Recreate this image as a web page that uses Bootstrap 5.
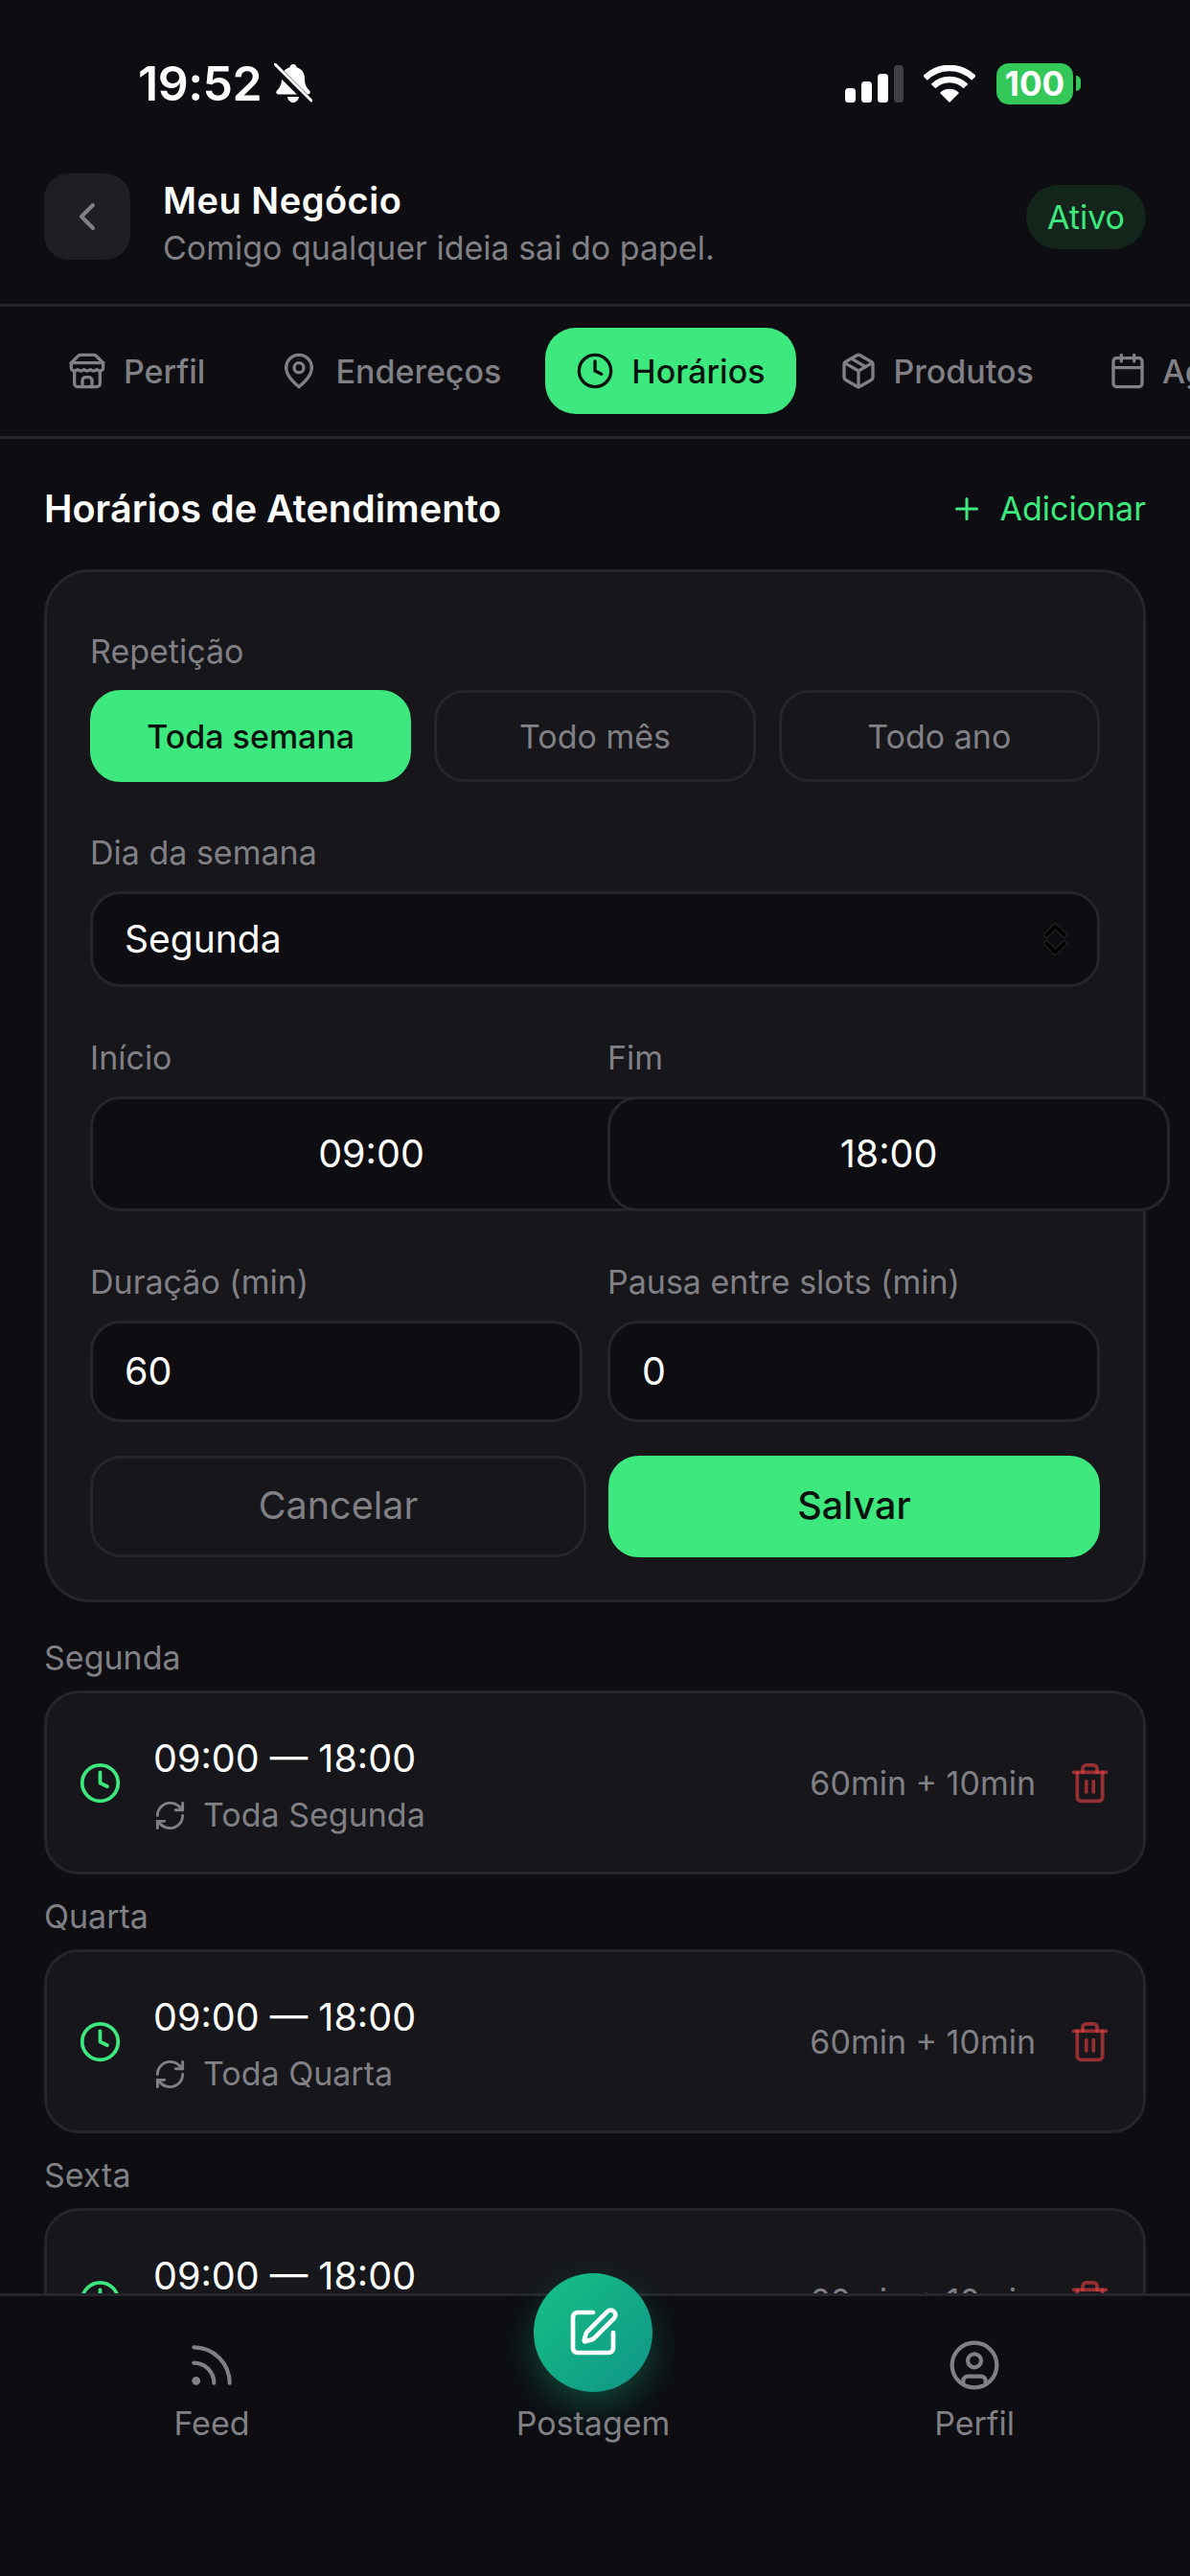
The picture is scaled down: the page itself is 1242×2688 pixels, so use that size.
<!DOCTYPE html>
<html lang="pt-BR">
<head>
  <meta charset="UTF-8">
  <title>Meu Negócio - Horários</title>
  <meta name="viewport" content="width=device-width, initial-scale=1">
  <link href="https://cdn.jsdelivr.net/npm/bootstrap@5.3.0/dist/css/bootstrap.min.css" rel="stylesheet">
  <style>
    html, body { height: 2688px; overflow: hidden; }
    body {
      font-family: "Inter", "Liberation Sans", sans-serif;
      background-color: #0d0d12;
      color: #fff;
      font-size: 34px;
    }
    svg.ico { fill: none; stroke: currentColor; stroke-width: 2; stroke-linecap: round; stroke-linejoin: round; flex: none; }

    .app { height: 2688px; }

    /* status bar */
    .status-bar { height: 174px; padding: 0 114px 0 144px; }
    .status-time { font-size: 50px; font-weight: 600; line-height: 1; letter-spacing: -.5px; }
    .status-bell { margin-left: 13px; }
    .status-wifi { margin: 0 22px 0 21px; }
    .batt { width: 80px; height: 43px; border-radius: 13px; background: #34c759; font-size: 35px; font-weight: 700; line-height: 43px; text-align: center; }
    .batt-nub { width: 5px; height: 16px; margin-left: 3px; background: #34c759; border-radius: 0 5px 5px 0; }

    /* header */
    .head-bar { height: 146px; padding: 7px 46px 0; border-bottom: 3px solid #25252c; align-items: flex-start; }
    .back-btn { width: 90px; height: 90px; border-radius: 26px; background: #1e1f24; color: #808085; flex: none; }
    .head-text { margin-left: 34px; padding-top: 6px; }
    .head-title { font-size: 38px; font-weight: 600; line-height: 44px; letter-spacing: .5px; }
    .head-sub { font-size: 34px; line-height: 40px; color: #808085; margin-top: 8px; }
    .status-pill { margin-top: 12px; height: 67px; width: 125px; border-radius: 34px; background: #14251c; color: #3de97e; font-size: 34px; }

    /* tabs */
    .tab-strip { padding: 22px 0 23px 39px; gap: 13px; border-bottom: 3px solid #25252c; overflow: hidden; flex-wrap: nowrap; }
    .tab-strip .nav-link { height: 90px; padding: 0 33px 0 32px; gap: 18px; color: #808085; font-size: 34px; font-weight: 500; border-radius: 32px; flex: none; }
    .tab-strip .nav-link.tight { gap: 16px; }
    .tab-strip .nav-link.active { background: #3de97e; color: #07120c; }

    /* content */
    .app-main { flex: 1 1 0; min-height: 0; overflow: hidden; padding: 50px 46px 0; }
    .sec-title { font-size: 39.600px; font-weight: 600; line-height: 46px; margin: 0; }
    .add-link { color: #3de97e; font-size: 34px; text-decoration: none; gap: 16px; line-height: 46px; }

    .form-box { background: #16161b; border: 3px solid #25252c; border-radius: 48px; padding: 63px 45px 44px; margin-top: 40px; }
    .fld-label { display: block; font-size: 34px; line-height: 40px; color: #808085; margin: 0 0 20px; }
    .fld-group { margin-bottom: 54px; }
    .two-cols { display: grid; grid-template-columns: 1fr 1fr; column-gap: 26px; }
    .two-cols > div { min-width: 0; }

    .opt-row { gap: 24px; }
    .opt-btn { flex: 1 1 0; height: 96px; border-radius: 32px; font-size: 34px; color: #808085; background: transparent; border: 3px solid #25252c; padding: 0; }
    .opt-btn.on { background: #3de97e; border-color: #3de97e; color: #07120c; font-weight: 500; }

    .form-control.dark-input, .form-select.dark-input {
      background-color: #0d0d12; border: 3px solid #25252c; border-radius: 32px; color: #fff; font-size: 39.500px; box-shadow: none;
    }
    .form-select.dark-input {
      height: 100px; padding: 0 33px; font-size: 39px;
      background-image: url("data:image/svg+xml,%3Csvg xmlns='http://www.w3.org/2000/svg' viewBox='0 0 24 32' fill='none' stroke='%23000' stroke-width='4' stroke-linecap='round' stroke-linejoin='round'%3E%3Cpath d='M3 12l9-9 9 9M3 20l9 9 9-9' stroke='%23333' stroke-width='5.400'/%3E%3Cpath d='M3 12l9-9 9 9M3 20l9 9 9-9'/%3E%3C/svg%3E");
      background-size: 25px 34px; background-position: right 31px center;
    }
    .form-control.time-input { width: 587px; max-width: none; height: 120px; text-align: center; padding: 0; position: relative; }
    .form-control.num-input { height: 106px; padding: 0 33px; }

    .act-row { gap: 23px; margin-top: 35px; }
    .act-btn { height: 106px; border-radius: 32px; font-size: 39.500px; padding: 0; }
    .act-btn.ghost { flex: 0 0 518px; background: transparent; border: 3px solid #25252c; color: #808085; }
    .act-btn.solid { flex: 0 0 513px; background: #3de97e; border: 3px solid #3de97e; color: #07120c; font-weight: 500; }

    .day-label { font-size: 34px; line-height: 40px; color: #808085; margin: 24px 0 14px; }
    .day-label.first { margin-top: 38px; }
    .slot { height: 192px; background: #16161b; border: 3px solid #25252c; border-radius: 36px; padding: 0 33px 0 33px; }
    .slot-clock { color: #3de97e; margin-right: 33px; }
    .slot-info { padding-top: 5px; }
    .slot-time { font-size: 39.500px; line-height: 48px; }
    .slot-rep { font-size: 34px; line-height: 40px; color: #808085; gap: 17px; margin-top: 15px; }
    .slot-meta { font-size: 34px; color: #808085; margin-right: 34px; }
    .slot-del { color: rgba(239, 68, 68, .58); }

    /* bottom nav */
    .bot-nav { height: 295px; background: #0d0d12; border-top: 3px solid #25252c; padding: 44px 26px 0 22px; position: relative; }
    .bot-item { flex: 1 1 0; color: #808085; text-decoration: none; font-size: 34px; line-height: 40px; gap: 13px; }
    .bot-ico { stroke-width: 1.8 !important; }
    .fab { width: 124px; height: 124px; margin-top: -68px; border-radius: 50%; color: #fff; background: linear-gradient(135deg, #16c184, #0f9488); box-shadow: 0 14px 36px rgba(22, 193, 132, .32); flex: none; }
  </style>
</head>
<body>
<div class="app d-flex flex-column">

  <!-- Status bar -->
  <div class="status-bar d-flex align-items-center justify-content-between flex-shrink-0">
    <div class="d-flex align-items-center">
      <span class="status-time">19:52</span>
      <svg class="status-bell" width="40" height="42" viewBox="0 0 40 42">
        <path d="M20 1c2 0 3.300 1.500 3.600 3.300 5.400 1.500 8.400 6 8.400 11.700 0 6 1.600 9 5 12.500 1.500 1.600.6 4-1.700 4H4.700c-2.300 0-3.200-2.400-1.700-4C6.400 25 8 22 8 16c0-5.700 3-10.200 8.400-11.700C16.700 2.500 18 1 20 1z" fill="#fff"/>
        <path d="M14 35h12c-.5 3.600-3 6-6 6s-5.500-2.400-6-6z" fill="#fff"/>
        <path d="M1 4l35 35" stroke="#0d0d12" stroke-width="8"/>
        <path d="M1 1l38 38" stroke="#fff" stroke-width="3" stroke-linecap="round"/>
      </svg>
    </div>
    <div class="d-flex align-items-center">
      <svg width="61" height="39" viewBox="0 0 61 39">
        <rect x="0" y="24" width="11" height="15" rx="3.500" fill="#fff"/>
        <rect x="17" y="17" width="11" height="22" rx="3.500" fill="#fff"/>
        <rect x="34" y="9" width="11" height="30" rx="3.500" fill="#fff"/>
        <rect x="51" y="0" width="10" height="39" rx="3.500" fill="#3f3f44"/>
      </svg>
      <svg class="status-wifi" width="54" height="39" viewBox="0 0 54 39">
        <path d="M27 39L17 29a14 14 0 0 1 20 0z" fill="#fff"/>
        <path d="M10 22a24 24 0 0 1 34 0" fill="none" stroke="#fff" stroke-width="6.500"/>
        <path d="M1.500 13.500a36 36 0 0 1 51 0" fill="none" stroke="#fff" stroke-width="6.500"/>
      </svg>
      <span class="batt">100</span>
      <span class="batt-nub"></span>
    </div>
  </div>

  <!-- Header -->
  <div class="head-bar d-flex flex-shrink-0">
    <a class="back-btn d-flex align-items-center justify-content-center" href="#">
      <svg class="ico" width="48" height="48" viewBox="0 0 24 24"><path d="m15 18-6-6 6-6"/></svg>
    </a>
    <div class="head-text flex-grow-1">
      <div class="head-title">Meu Negócio</div>
      <div class="head-sub">Comigo qualquer ideia sai do papel.</div>
    </div>
    <span class="status-pill d-flex align-items-center justify-content-center">Ativo</span>
  </div>

  <!-- Tabs -->
  <ul class="nav tab-strip flex-shrink-0">
    <li class="nav-item"><a class="nav-link d-flex align-items-center" href="#">
      <svg class="ico" width="40" height="40" viewBox="0 0 24 24"><path d="m2 7 4.410-4.410A2 2 0 0 1 7.830 2h8.340a2 2 0 0 1 1.420.590L22 7"/><path d="M4 12v8a2 2 0 0 0 2 2h12a2 2 0 0 0 2-2v-8"/><path d="M15 22v-4a2 2 0 0 0-2-2h-2a2 2 0 0 0-2 2v4"/><path d="M2 7h20"/><path d="M22 7v3a2 2 0 0 1-2 2 2.700 2.700 0 0 1-1.590-.630.700.700 0 0 0-.820 0A2.700 2.700 0 0 1 16 12a2.700 2.700 0 0 1-1.590-.630.700.700 0 0 0-.820 0A2.700 2.700 0 0 1 12 12a2.700 2.700 0 0 1-1.590-.630.700.700 0 0 0-.820 0A2.700 2.700 0 0 1 8 12a2.700 2.700 0 0 1-1.590-.630.700.700 0 0 0-.820 0A2.700 2.700 0 0 1 4 12a2 2 0 0 1-2-2V7"/></svg>
      Perfil</a></li>
    <li class="nav-item"><a class="nav-link d-flex align-items-center" href="#">
      <svg class="ico" width="40" height="40" viewBox="0 0 24 24"><path d="M20 10c0 6-8 12-8 12s-8-6-8-12a8 8 0 0 1 16 0Z"/><circle cx="12" cy="10" r="3"/></svg>
      Endereços</a></li>
    <li class="nav-item"><a class="nav-link active d-flex align-items-center" href="#">
      <svg class="ico" width="40" height="40" viewBox="0 0 24 24"><circle cx="12" cy="12" r="10"/><path d="M12 6v6l4 2"/></svg>
      Horários</a></li>
    <li class="nav-item"><a class="nav-link tight d-flex align-items-center" href="#">
      <svg class="ico" width="40" height="40" viewBox="0 0 24 24"><path d="M11 21.730a2 2 0 0 0 2 0l7-4A2 2 0 0 0 21 16V8a2 2 0 0 0-1-1.730l-7-4a2 2 0 0 0-2 0l-7 4A2 2 0 0 0 3 8v8a2 2 0 0 0 1 1.730z"/><path d="M12 22V12"/><path d="m3.300 7 8.700 5 8.700-5"/><path d="m7.500 4.270 9 5.150"/></svg>
      Produtos</a></li>
    <li class="nav-item"><a class="nav-link tight d-flex align-items-center" href="#">
      <svg class="ico" width="40" height="40" viewBox="0 0 24 24"><path d="M8 2v4"/><path d="M16 2v4"/><rect width="18" height="18" x="3" y="4" rx="2"/><path d="M3 10h18"/></svg>
      Agenda</a></li>
  </ul>

  <!-- Content -->
  <main class="app-main d-flex flex-column">
    <div class="d-flex align-items-center justify-content-between flex-shrink-0">
      <h2 class="sec-title">Horários de Atendimento</h2>
      <a class="add-link d-flex align-items-center" href="#">
        <svg class="ico" width="36" height="36" viewBox="0 0 24 24"><path d="M5 12h14"/><path d="M12 5v14"/></svg>
        Adicionar</a>
    </div>

    <form class="form-box flex-shrink-0" onsubmit="return false;">
      <div class="fld-group">
        <label class="fld-label">Repetição</label>
        <div class="opt-row d-flex">
          <button type="button" class="btn opt-btn on">Toda semana</button>
          <button type="button" class="btn opt-btn">Todo mês</button>
          <button type="button" class="btn opt-btn">Todo ano</button>
        </div>
      </div>
      <div class="fld-group">
        <label class="fld-label">Dia da semana</label>
        <select class="form-select dark-input">
          <option>Segunda</option>
          <option>Terça</option>
          <option>Quarta</option>
          <option>Quinta</option>
          <option>Sexta</option>
        </select>
      </div>
      <div class="fld-group two-cols">
        <div>
          <label class="fld-label">Início</label>
          <input type="text" class="form-control dark-input time-input" value="09:00">
        </div>
        <div>
          <label class="fld-label">Fim</label>
          <input type="text" class="form-control dark-input time-input" value="18:00">
        </div>
      </div>
      <div class="two-cols">
        <div>
          <label class="fld-label">Duração (min)</label>
          <input type="text" class="form-control dark-input num-input" value="60">
        </div>
        <div>
          <label class="fld-label">Pausa entre slots (min)</label>
          <input type="text" class="form-control dark-input num-input" value="0">
        </div>
      </div>
      <div class="act-row d-flex">
        <button type="button" class="btn act-btn ghost">Cancelar</button>
        <button type="submit" class="btn act-btn solid">Salvar</button>
      </div>
    </form>

    <div class="day-label first flex-shrink-0">Segunda</div>
    <div class="slot d-flex align-items-center flex-shrink-0">
      <svg class="ico slot-clock" width="45" height="45" viewBox="0 0 24 24"><circle cx="12" cy="12" r="10"/><path d="M12 6v6l4 2"/></svg>
      <div class="slot-info flex-grow-1">
        <div class="slot-time">09:00 — 18:00</div>
        <div class="slot-rep d-flex align-items-center">
          <svg class="ico" width="35" height="35" viewBox="0 0 24 24"><path d="M3 12a9 9 0 0 1 9-9 9.750 9.750 0 0 1 6.740 2.740L21 8"/><path d="M21 3v5h-5"/><path d="M21 12a9 9 0 0 1-9 9 9.750 9.750 0 0 1-6.740-2.740L3 16"/><path d="M8 16H3v5"/></svg>
          Toda Segunda
        </div>
      </div>
      <span class="slot-meta">60min + 10min</span>
      <svg class="ico slot-del" width="45" height="45" viewBox="0 0 24 24"><path d="M3 6h18"/><path d="M19 6v14c0 1-1 2-2 2H7c-1 0-2-1-2-2V6"/><path d="M8 6V4c0-1 1-2 2-2h4c1 0 2 1 2 2v2"/><path d="M10 11v6"/><path d="M14 11v6"/></svg>
    </div>

    <div class="day-label flex-shrink-0">Quarta</div>
    <div class="slot d-flex align-items-center flex-shrink-0">
      <svg class="ico slot-clock" width="45" height="45" viewBox="0 0 24 24"><circle cx="12" cy="12" r="10"/><path d="M12 6v6l4 2"/></svg>
      <div class="slot-info flex-grow-1">
        <div class="slot-time">09:00 — 18:00</div>
        <div class="slot-rep d-flex align-items-center">
          <svg class="ico" width="35" height="35" viewBox="0 0 24 24"><path d="M3 12a9 9 0 0 1 9-9 9.750 9.750 0 0 1 6.740 2.740L21 8"/><path d="M21 3v5h-5"/><path d="M21 12a9 9 0 0 1-9 9 9.750 9.750 0 0 1-6.740-2.740L3 16"/><path d="M8 16H3v5"/></svg>
          Toda Quarta
        </div>
      </div>
      <span class="slot-meta">60min + 10min</span>
      <svg class="ico slot-del" width="45" height="45" viewBox="0 0 24 24"><path d="M3 6h18"/><path d="M19 6v14c0 1-1 2-2 2H7c-1 0-2-1-2-2V6"/><path d="M8 6V4c0-1 1-2 2-2h4c1 0 2 1 2 2v2"/><path d="M10 11v6"/><path d="M14 11v6"/></svg>
    </div>

    <div class="day-label flex-shrink-0">Sexta</div>
    <div class="slot d-flex align-items-center flex-shrink-0">
      <svg class="ico slot-clock" width="45" height="45" viewBox="0 0 24 24"><circle cx="12" cy="12" r="10"/><path d="M12 6v6l4 2"/></svg>
      <div class="slot-info flex-grow-1">
        <div class="slot-time">09:00 — 18:00</div>
        <div class="slot-rep d-flex align-items-center">
          <svg class="ico" width="35" height="35" viewBox="0 0 24 24"><path d="M3 12a9 9 0 0 1 9-9 9.750 9.750 0 0 1 6.740 2.740L21 8"/><path d="M21 3v5h-5"/><path d="M21 12a9 9 0 0 1-9 9 9.750 9.750 0 0 1-6.740-2.740L3 16"/><path d="M8 16H3v5"/></svg>
          Toda Sexta
        </div>
      </div>
      <span class="slot-meta">60min + 10min</span>
      <svg class="ico slot-del" width="45" height="45" viewBox="0 0 24 24"><path d="M3 6h18"/><path d="M19 6v14c0 1-1 2-2 2H7c-1 0-2-1-2-2V6"/><path d="M8 6V4c0-1 1-2 2-2h4c1 0 2 1 2 2v2"/><path d="M10 11v6"/><path d="M14 11v6"/></svg>
    </div>
  </main>

  <!-- Bottom nav -->
  <nav class="bot-nav d-flex align-items-start flex-shrink-0">
    <a class="bot-item d-flex flex-column align-items-center" href="#">
      <svg class="ico bot-ico" width="56" height="56" viewBox="0 0 24 24"><path d="M4 11a9 9 0 0 1 9 9"/><path d="M4 4a16 16 0 0 1 16 16"/><circle cx="5" cy="19" r="1"/></svg>
      Feed</a>
    <a class="bot-item d-flex flex-column align-items-center" href="#">
      <span class="fab d-flex align-items-center justify-content-center">
        <svg class="ico" width="56" height="56" viewBox="0 0 24 24"><path d="M12 3H5a2 2 0 0 0-2 2v14a2 2 0 0 0 2 2h14a2 2 0 0 0 2-2v-7"/><path d="M18.375 2.625a1 1 0 0 1 3 3l-9.013 9.014a2 2 0 0 1-.853.505l-2.873.84a.5.5 0 0 1-.62-.62l.84-2.873a2 2 0 0 1 .506-.852z"/></svg>
      </span>
      Postagem</a>
    <a class="bot-item d-flex flex-column align-items-center" href="#">
      <svg class="ico bot-ico" width="56" height="56" viewBox="0 0 24 24"><circle cx="12" cy="12" r="10"/><circle cx="12" cy="10" r="3"/><path d="M7 20.662V19a2 2 0 0 1 2-2h6a2 2 0 0 1 2 2v1.662"/></svg>
      Perfil</a>
  </nav>
</div>
<script src="https://cdn.jsdelivr.net/npm/bootstrap@5.3.0/dist/js/bootstrap.bundle.min.js"></script>
</body>
</html>
